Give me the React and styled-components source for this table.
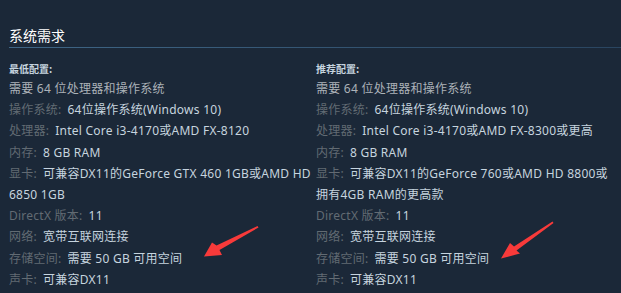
import React from "react";
import styled, { createGlobalStyle } from "styled-components";

const Global = createGlobalStyle`
  html, body { margin: 0; padding: 0; background: #1b2838; }
  body { font-family: "Noto Sans", "Noto Sans CJK SC", sans-serif; }
`;

const Page = styled.div`
  position: relative;
  width: 621px;
  height: 293px;
  overflow: hidden;
  background: #1b2838;
`;

const Title = styled.h2`
  margin: 25px 0 0 9px;
  padding: 0 0 2px 0;
  font-family: "Noto Sans CJK SC", sans-serif;
  font-size: 14px;
  line-height: 20px;
  font-weight: 400;
  color: #ffffff;
  border-bottom: 1px solid transparent;
  border-image: linear-gradient(to right, #3f6686 0%, #2a4560 100%) 1;
`;

const Columns = styled.div`
  display: grid;
  grid-template-columns: 300px 305px;
  column-gap: 7px;
  padding-left: 9px;
  margin-top: 13px;
`;

const Column = styled.div`
  display: flex;
  flex-direction: column;
  min-width: 0;
`;

const ColHead = styled.div`
  font-family: "Noto Sans CJK SC", sans-serif;
  font-size: 10px;
  line-height: 16px;
  font-weight: 700;
  color: #c6d4df;
  margin-bottom: 1px;
`;

const List = styled.ul`
  list-style: none;
  margin: 0;
  padding: 0;
`;

const Item = styled.li`
  font-size: 12px;
  line-height: 21.2px;
  letter-spacing: 0.25px;
  white-space: pre;
  color: ${(p) => (p.$plain ? "#acb2b8" : "#c6d4df")};
`;

const Label = styled.span`
  color: #626b73;
  margin-right: 6px;
`;

const Overlay = styled.svg`
  position: absolute;
  left: 0;
  top: 0;
  pointer-events: none;
`;

const minimum = [
  ["操作系统:", "64位操作系统(Windows 10)"],
  ["处理器:", "Intel Core i3-4170或AMD FX-8120"],
  ["内存:", "8 GB RAM"],
  ["显卡:", "可兼容DX11的GeForce GTX 460 1GB或AMD HD\n6850 1GB"],
  ["DirectX 版本:", "11"],
  ["网络:", "宽带互联网连接"],
  ["存储空间:", "需要 50 GB 可用空间"],
  ["声卡:", "可兼容DX11"],
];

const recommended = [
  ["操作系统:", "64位操作系统(Windows 10)"],
  ["处理器:", "Intel Core i3-4170或AMD FX-8300或更高"],
  ["内存:", "8 GB RAM"],
  ["显卡:", "可兼容DX11的GeForce 760或AMD HD 8800或\n拥有4GB RAM的更高款"],
  ["DirectX 版本:", "11"],
  ["网络:", "宽带互联网连接"],
  ["存储空间:", "需要 50 GB 可用空间"],
  ["声卡:", "可兼容DX11"],
];

function Req({ head, rows }) {
  return (
    <Column>
      <ColHead>{head}</ColHead>
      <List>
        <Item $plain>需要 64 位处理器和操作系统</Item>
        {rows.map(([l, v]) => (
          <Item key={l}>
            <Label>{l}</Label>
            {v}
          </Item>
        ))}
      </List>
    </Column>
  );
}

export default function App() {
  return (
    <>
      <Global />
      <Page>
        <Title>系统需求</Title>
        <Columns>
          <Req head="最低配置:" rows={minimum} />
          <Req head="推荐配置:" rows={recommended} />
        </Columns>
        <Overlay width="621" height="293" viewBox="0 0 621 293">
          <polygon
            fill="#f83a3a"
            points="204,256.5 212,242.5 216.5,245.5 257.5,226 258.5,227.5 219.5,250 222,255"
          />
          <polygon
            fill="#f83a3a"
            points="501,258.5 510,243 514,246.5 552.5,221.5 553.5,223 516.5,250.5 520,253.5"
          />
        </Overlay>
      </Page>
    </>
  );
}
